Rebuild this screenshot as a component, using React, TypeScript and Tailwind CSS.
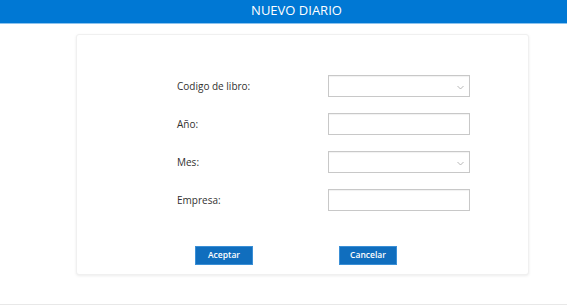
import React from 'react';

const font = { fontFamily: '"Open Sans", "Noto Sans", "Liberation Sans", sans-serif' };

const Chevron = () => (
  <svg width="7" height="5" viewBox="0 0 7 5" className="absolute right-[5px] top-[9px]">
    <path d="M0.5 1 L3.5 4 L6.5 1" fill="none" stroke="#a6a6a6" strokeWidth="0.8" />
  </svg>
);

const Field = ({ select }: { select?: boolean }) => (
  <div className="relative h-[22px] w-[142px] border border-[#c8c8c8] bg-white shadow-[inset_0_1px_1px_rgba(0,0,0,0.06)]">
    {select && <Chevron />}
  </div>
);

const rows: { label: string; select?: boolean }[] = [
  { label: 'Codigo de libro:', select: true },
  { label: 'Año:' },
  { label: 'Mes:', select: true },
  { label: 'Empresa:' },
];

export default function App() {
  return (
    <div className="h-[306px] w-[567px] overflow-hidden bg-white" style={font}>
      <header className="flex h-[24px] items-center justify-center border-b border-[#8cc3ee] bg-[#0078d4] pb-px pl-[26px] text-[13px] text-white">
        NUEVO DIARIO
      </header>

      <div className="ml-[76px] mt-[10px] h-[241px] w-[453px] rounded-[3px] border border-[#f0f0f0] bg-white shadow-[0_1px_3px_rgba(0,0,0,0.08)]">
        <div className="grid grid-cols-[151px_142px] gap-y-[16px] pl-[100px] pt-[40px]">
          {rows.map((r) => (
            <React.Fragment key={r.label}>
              <div className="flex h-[22px] items-center text-[10px] text-[#323130]">{r.label}</div>
              <Field select={r.select} />
            </React.Fragment>
          ))}
        </div>
        <div className="mt-[35px] flex gap-[86px] pl-[118px]">
          <button className="h-[19px] w-[58px] border border-[#3a8fd6] bg-[#106ebe] text-[8.5px] font-semibold text-white">
            Aceptar
          </button>
          <button className="h-[19px] w-[58px] border border-[#3a8fd6] bg-[#106ebe] text-[8.5px] font-semibold text-white">
            Cancelar
          </button>
        </div>
      </div>

      <div className="mt-[29px] border-t border-[#e8e8e8]" />
    </div>
  );
}
